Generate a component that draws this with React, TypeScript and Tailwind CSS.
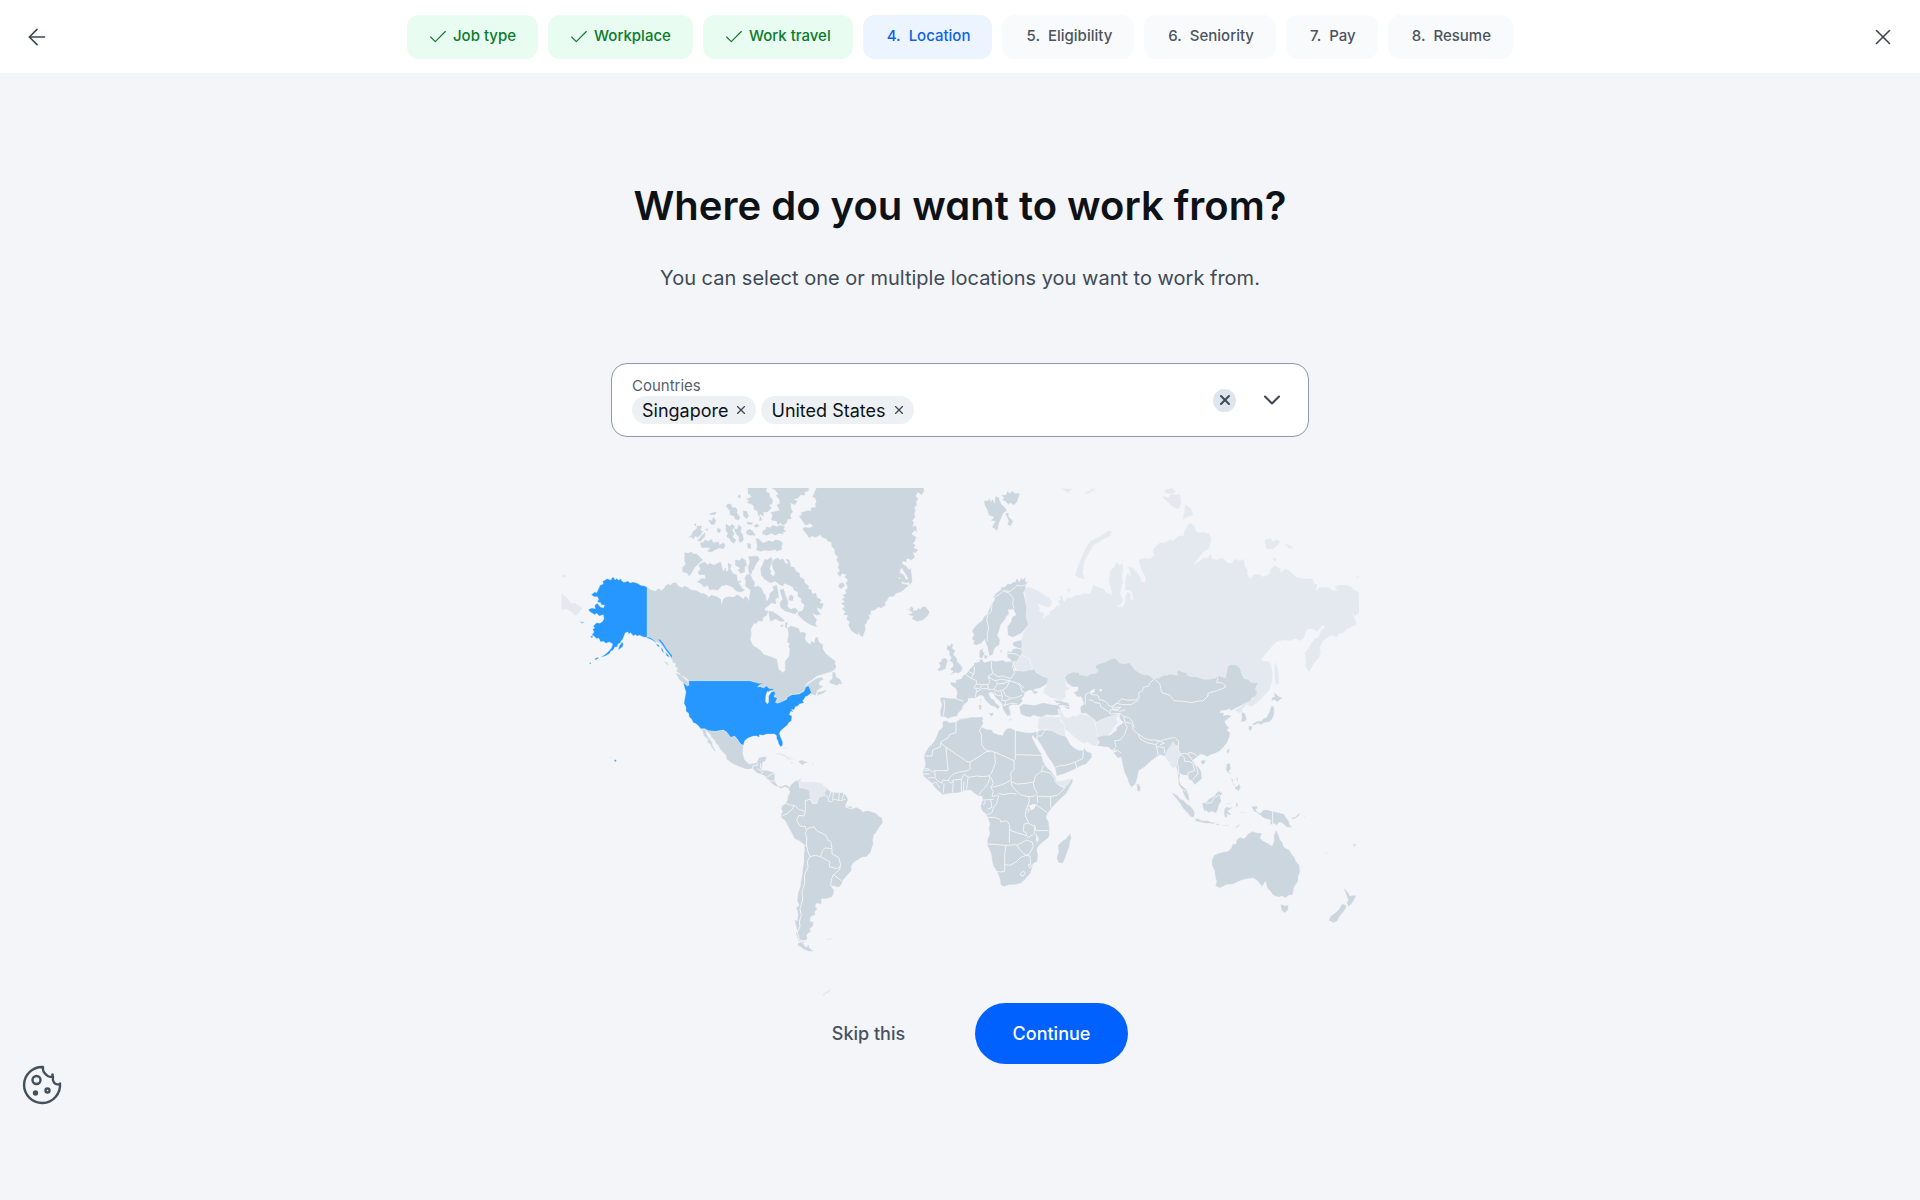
import { useState } from 'react'
import { ArrowLeft, Check, ChevronDown, X } from 'lucide-react'

const steps = [
    { label: 'Job type', state: 'done' },
    { label: 'Workplace', state: 'done' },
    { label: 'Work travel', state: 'done' },
    { label: 'Location', state: 'current' },
    { label: 'Eligibility', state: 'todo' },
    { label: 'Seniority', state: 'todo' },
    { label: 'Pay', state: 'todo' },
    { label: 'Resume', state: 'todo' },
]

const stepStyles: Record<string, string> = {
    done: 'bg-[#e9fcf2] text-[#0b7a2d]',
    current: 'bg-[#ecf4ff] text-[#0f62e6]',
    todo: 'bg-[#f9fafc] text-[#4b545e]',
}

// Map regions, each drawn from its own origin. Three units make one pixel.
const regions = [
    {
        name: 'Russia',
        origin: 'translate(1437 -24)',
        muted:
            'M-44 318L-40 322-30 322-10 330 6 340 20 350 28 352 36 366 30 382 20 382 8 376 -8 370 0 386 -4 392 12 400 10 418 18 408 28 404 28 396 44 386 48 378 60 376 54 364 62 358 58 350 66 346 72 366 84 352 94 354 104 346 118 346 130 340 150 342 156 328 160 314 172 320 190 326 198 336 216 346 214 330 206 300 212 270 222 262 230 246 238 256 246 250 250 262 246 290 248 310 240 340 250 360 242 372 232 380 246 380 254 374 256 350 262 336 272 340 272 360 280 360 276 336 266 330 256 330 256 300 262 280 272 290 270 270 262 262 276 262 286 272 300 290 306 306 316 308 316 290 306 272 300 254 296 240 314 234 330 236 342 226 338 210 350 196 360 188 376 188 390 178 400 182 414 168 430 168 434 150 450 128 464 138 466 150 474 158 490 156 508 162 514 176 510 194 506 206 490 216 478 230 460 256 478 244 490 234 502 234 512 222 516 236 530 240 540 234 552 236 562 248 576 250 584 236 596 242 612 238 614 258 622 270 622 284 632 298 640 284 656 282 670 290 690 282 692 268 704 256 720 266 722 278 736 266 748 272 762 284 768 292 790 296 818 296 822 310 832 314 828 332 838 322 850 322 866 322 880 332 892 332 884 320 900 314 930 318 942 330 956 336 958 398 944 408 936 400 946 420 950 434 936 440 920 448 910 458 898 460 890 472 874 466 860 474 848 484 840 500 842 516 836 534 820 552 808 576 796 560 798 542 794 520 806 504 814 490 824 476 836 470 844 450 856 440 848 436 830 456 820 448 804 446 796 460 792 474 782 482 766 476 750 482 734 480 714 484 702 492 690 506 678 520 664 538 670 544 684 544 694 556 698 580 696 604 688 630 676 644 664 656 650 668 634 680 616 672 540 620 500 640 300 620 120 640 74 592 80 620 100 626 76 632 78 650 64 662 48 656 30 652 10 638 14 624 22 614 -60 590 -80 550 -60 520 -56 480 -50 460 -34 434 -42 410 -40 380 -46 340Z M106 286L112 264 122 240 134 210 150 184 180 170 206 152 216 154 210 168 186 180 160 196 146 220 132 246 128 276 134 298 118 294Z M374 30L396 24 408 36 394 42 378 40Z M366 50L378 50 384 54 394 42 410 44 420 42 424 70 416 88 398 80 384 66Z M432 100L436 74 452 84 460 104 444 110 428 118Z M674 180L690 174 700 186 708 178 720 184 714 194 700 206 680 208 676 194Z M732 190L746 194 762 202 748 206Z M696 234L710 236 706 246Z M64 26L98 26 84 38Z M134 42L140 34 150 32 154 26 168 26 146 40Z M704 546L712 560 716 586 716 610 708 616 704 590Z M948 294L954 288 956 294Z M82 328L90 326 90 334 84 336Z',
    },
    {
        name: 'Canada and Alaska',
        origin: 'translate(-33 -24)',
        outline: '#ccd6de',
        land:
            'M291 322L302 330 318 334 322 328 330 326 330 334 342 326 346 318 356 312 362 318 366 310 378 308 384 318 398 324 402 318 412 322 424 330 440 332 452 340 464 342 474 348 470 356 484 346 500 350 512 358 514 376 520 358 528 352 536 350 552 352 562 344 574 352 580 358 586 348 594 356 597 366 600 340 604 318 608 300 614 306 612 322 624 318 634 324 640 338 646 346 650 366 658 352 660 340 672 330 668 320 680 316 684 336 686 352 676 356 678 372 664 368 654 378 644 384 646 394 654 392 650 406 640 412 636 424 624 422 620 430 612 430 606 440 602 450 604 462 600 478 608 496 624 506 634 514 642 524 662 530 680 538 682 548 686 568 698 578 706 572 706 544 718 528 720 508 716 500 720 490 712 486 716 466 714 444 722 438 746 446 750 458 760 456 768 462 764 476 770 486 782 494 784 484 794 490 796 474 802 472 806 486 818 494 818 508 830 524 838 530 846 536 856 544 854 552 858 558 856 566 846 574 826 580 800 588 785 600 770 610 762 622 776 612 796 598 814 592 820 598 808 604 806 614 818 620 802 630 796 646 784 642 778 620 768 620 762 632 748 640 726 642 712 652 700 662 680 672 676 668 684 656 672 644 668 632 652 624 640 624 628 616 614 606 600 600 416 600 404 590 394 586 388 578 380 574 384 564 376 560 378 550 370 548 366 536 352 516 330 490 304 476 291 472Z M378 580L392 586 404 596 414 606 416 618 402 610 388 598Z M848 578L854 576 858 592 870 598 876 612 868 610 862 616 842 610 838 604 848 596Z M804 636L812 636 830 630 822 638 802 646Z M344 546L352 548 354 556Z M404 218L414 220 424 216 430 222 440 222 450 232 458 240 446 250 434 262 426 276 418 288 410 278 398 276 398 262 408 252 404 244Z M446 256L454 250 464 246 472 254 480 250 492 256 504 250 512 246 516 264 520 276 526 264 528 276 536 270 534 250 544 254 540 266 550 282 560 284 562 300 570 316 578 326 584 330 574 336 560 334 548 322 530 314 514 318 504 330 488 328 478 330 474 316 462 320 452 310 442 306 454 296 468 296 464 284 448 284 444 276 452 268Z M556 240L570 242 574 234 586 240 590 256 584 260 584 276 572 280 564 270 572 264 556 256Z M596 230L622 228 628 238 618 252 612 266 606 274 604 282 598 280 594 262 600 246Z M590 284L600 282 610 304 608 324 602 330 594 324 586 318 588 302 584 296Z M640 250L644 238 652 240 662 232 668 240 662 256 658 266 664 274 660 280 670 290 676 280 668 262 666 250 674 238 684 234 690 240 698 236 708 252 716 250 708 238 718 240 722 260 732 262 738 274 748 280 750 292 762 298 764 308 776 318 774 326 784 330 786 342 798 340 800 352 814 360 808 368 820 372 814 388 800 382 804 394 812 402 802 406 786 400 800 420 796 430 800 440 782 434 768 426 756 416 744 404 744 396 758 392 764 376 754 366 754 356 744 348 744 336 732 330 728 320 718 316 704 310 698 318 690 314 676 304 660 308 644 298 634 286 632 266Z M718 348L724 344 730 350 728 362 716 360Z M690 330L700 326 706 344 714 366 712 380 722 388 736 384 744 392 736 402 722 398 704 392 692 382 690 368 698 358Z M656 394L670 396 684 406 700 418 704 424 690 424 676 416 662 424 658 410Z M692 436L700 434 696 442Z M706 430L712 426 710 446 706 440Z M618 176L626 176 632 184 640 190 656 182 668 186 676 180 690 182 698 190 694 200 696 208 680 214 676 208 660 212 644 210 632 214 620 210 622 196Z M594 24L650 24 648 36 658 40 660 50 668 60 666 72 656 74 664 84 652 96 640 96 640 108 630 102 626 110 622 92 612 88 612 78 604 72 592 68 598 60 588 58 606 50 594 40Z M666 24L776 24 776 32 764 36 764 46 752 44 744 54 730 58 742 64 734 74 722 68 722 82 728 96 720 104 724 116 712 118 710 128 700 136 690 128 684 134 680 124 664 120 668 104 662 98 684 92 690 90 680 76 690 70 688 58 678 46 686 44 676 30Z M638 154L646 150 650 140 660 144 668 136 680 140 692 136 704 140 700 148 708 154 698 156 700 162 688 160 676 166 664 160 650 166 638 162Z M528 78L534 72 542 72 548 84 556 82 562 90 560 98 570 112 566 120 556 118 552 108 540 104 540 92Z M580 92L590 94 596 108 590 116 580 108Z M564 48L570 44 572 52 566 54Z M528 132L540 140 546 132 554 140 546 150 552 160 548 172 558 180 552 190 542 184 540 176 530 170 534 160 528 152Z M552 146L562 148 566 134 574 142 572 156 578 164 580 180 572 188 566 180 568 170 560 164Z M590 152L600 148 608 154 616 166 600 166 590 162Z M592 190L602 192 602 206 594 204Z M592 126L608 128 604 134 592 132Z M630 108L636 120 628 122Z M612 136L624 132 626 140 616 142Z M450 190L462 186 464 180 476 184 484 178 490 188 506 186 508 196 520 188 526 196 520 206 508 204 494 210 484 216 472 214 482 204 466 202 456 204Z M416 172L424 166 430 154 440 146 442 138 456 138 450 150 458 154 452 164 444 172 436 168 430 178 424 170Z M442 182L458 164 466 158 464 170 452 184Z M476 120L486 122 490 112 498 122 492 134 482 132Z M478 102L488 98 500 96 494 104 484 104Z M502 144L512 148 510 158 502 156Z M432 134L438 130 438 138Z M466 148L474 146 472 152Z M564 304L572 302 572 308Z',
        muted: 'M34 340L50 352 66 372 74 368 84 376 98 384 90 394 78 408 64 396 48 386 34 390Z M36 288L44 282 50 290 40 292Z',
        selected:
            'M190 291L196 300 200 295 206 301 212 296 216 303 222 307 234 303 240 309 250 306 262 310 272 316 284 318 291 322 291 472 280 471 274 468 268 466 262 468 256 464 250 468 242 458 236 462 234 456 226 458 222 468 218 478 214 482 210 490 204 492 202 500 194 502 190 510 182 514 180 520 166 528 152 532 164 524 176 514 184 504 188 492 178 486 168 490 160 484 152 486 146 474 140 476 134 470 126 464 132 456 128 448 134 444 130 438 140 428 150 430 158 424 162 416 160 404 148 408 140 400 134 404 118 394 116 388 126 384 136 386 134 376 142 370 150 380 160 384 164 376 154 374 152 368 142 366 146 358 142 350 132 350 124 344 134 336 140 338 144 330 150 316 160 312 158 304 172 296 182 300 186 294Z M216 486L220 492 218 500 210 506 204 510 208 498Z M134 536L144 532 146 535 136 540Z M88 422L94 426 104 428 96 430Z M120 470L130 466 126 474Z M119 548L123 548 123 552 119 552Z M291 470L302 473 314 482 320 490 312 484 302 478 291 474Z M324 478L330 478 340 490 350 506 358 516 366 526 366 536 360 526 350 514 342 502 334 490Z M318 492L326 494 330 502 322 498Z M332 502L338 508 342 520 336 514Z M346 516L354 524 360 532 350 528Z',
    },
    {
        name: 'Greenland and Iceland',
        origin: 'translate(537 -24)',
        outline: '#ccd6de',
        land:
            'M230 24L550 24 552 34 544 44 534 36 526 48 534 56 528 66 530 74 522 84 526 92 522 102 526 110 516 122 522 128 516 140 528 138 530 156 524 150 514 162 528 172 524 184 518 190 526 196 520 204 534 210 526 218 518 216 524 232 514 240 500 234 498 246 488 242 486 252 498 258 506 270 512 266 516 304 510 314 508 306 496 308 486 304 484 312 472 308 470 298 484 296 472 288 478 278 490 284 498 300 506 296 492 274 484 260 490 256 480 270 474 308 506 316 494 326 486 334 468 340 462 348 446 350 440 362 434 368 436 376 422 384 416 380 404 390 392 392 392 404 386 402 388 416 382 420 378 432 374 432 376 450 372 458 368 470 360 466 356 456 352 464 344 458 334 452 330 444 326 434 330 426 320 418 324 406 312 404 316 394 306 386 316 380 304 370 316 366 306 358 316 352 308 346 320 340 316 332 324 322 318 310 324 300 314 290 320 284 306 280 300 290 292 280 300 272 294 262 298 252 290 240 294 232 284 220 284 208 276 200 274 186 264 184 260 176 246 172 242 164 228 172 214 168 208 174 202 164 188 148 194 142 210 144 220 138 210 130 198 136 192 130 178 108 186 104 184 98 202 92 212 94 214 84 228 82 226 70 230 66 226 54 218 50Z M298 312L308 308 314 316 304 326 296 320Z M502 386L510 390 512 380 520 384 518 392 530 392 536 384 540 390 546 382 556 380 562 388 568 396 562 408 548 420 532 424 516 416 522 408 506 404 520 398Z',
    },
    {
        name: 'Mexico and Central America',
        origin: 'translate(-33 516)',
        land:
            'M452 206L476 212 496 214 520 212 530 216 542 230 554 228 562 240 572 252 580 258 578 280 584 300 598 312 612 310 620 308 626 294 638 290 650 290 646 304 638 306 636 322 634 330 654 332 674 338 674 362 678 370 684 378 692 380 706 374 718 380 716 388 710 382 704 380 692 386 684 380 676 378 664 370 660 362 650 356 646 348 636 344 620 338 608 326 590 328 568 320 546 310 530 298 528 286 512 270 504 256 498 250 492 238 484 232 480 222 468 212 468 220 478 236 486 246 488 258 498 274 494 274 484 262 482 254 472 246 474 238 462 228 458 214Z M746 304L754 300 764 304 776 308 764 310 758 316 748 308Z M786 311L792 312 790 315Z M722 306L732 308 724 310Z',
        muted: 'M672 286L684 278 704 284 716 292 732 298 714 299 708 292 694 286 684 282Z M700 264L710 262 712 268Z',
        borders: 'M606 328L610 316 622 316 622 308 M622 326L636 334 M632 344L640 334 M650 352L660 346 674 338 M662 362L676 364 M632 310L632 326',
        selected:
            'M416 62L600 62 612 66 626 70 640 70 630 74 622 80 632 80 640 84 650 78 658 86 672 86 670 90 660 92 654 96 652 94 648 104 646 124 652 132 656 126 656 108 664 96 672 94 676 100 672 110 682 114 676 128 684 130 698 124 710 118 712 112 726 104 748 102 762 94 768 80 776 78 780 88 784 98 772 108 766 110 762 118 758 122 762 128 748 132 744 138 736 140 732 150 724 148 730 156 722 154 718 164 726 168 724 182 716 188 712 196 704 202 692 212 688 220 692 232 698 246 698 256 692 260 686 252 684 242 680 236 680 228 674 222 664 222 650 222 640 226 628 224 628 232 620 228 610 228 594 234 584 242 580 256 572 252 562 238 554 228 542 232 530 216 520 210 496 214 476 212 464 206 452 206 446 198 436 190 430 188 424 176 418 172 416 160 408 154 408 142 402 130 404 118 408 96 404 84 400 68 412 78 417 76Z M193 299L199 300 198 305 193 304Z M180 291L182 292 181 294Z',
    },
    {
        name: 'South America',
        origin: 'translate(597 816)',
        land:
            'M84 108L90 96 86 88 92 76 104 64 116 60 124 54 118 68 124 64 132 68 150 66 170 68 186 70 190 78 198 82 206 90 212 96 230 98 248 98 260 108 264 120 258 132 256 140 274 138 278 146 290 142 304 150 308 156 320 152 330 154 348 160 356 168 366 174 368 188 356 204 348 218 342 224 338 240 340 252 336 262 332 276 320 290 306 292 296 298 280 308 274 318 274 332 260 348 248 362 244 374 236 382 220 378 212 378 222 390 220 404 214 412 200 416 184 416 184 432 168 430 166 440 172 446 164 456 166 464 152 470 150 484 160 486 160 496 150 506 152 514 140 524 142 538 130 544 116 544 108 520 112 512 106 490 104 480 112 482 114 466 112 450 108 444 118 436 112 424 114 400 122 376 122 366 126 350 128 330 132 300 132 280 134 268 132 254 120 244 104 236 98 224 88 206 76 182 64 174 64 160 68 156 64 146 66 138 78 130 82 120Z M116 548L134 544 130 552 138 562 146 554 148 564 162 574 146 574 130 568 122 560 112 556Z M200 538L206 536 206 540Z M208 537L214 535 213 539Z',
        muted: 'M124 64L118 72 120 84 136 86 148 92 150 116 158 130 172 128 178 112 196 106 194 98 202 86 190 78 186 70 170 68 150 66 132 68Z M188 704L196 696 204 692 214 686 208 696 198 702 190 708Z M176 702L180 700 178 704Z',
        borders:
            'M78 130L92 136 104 136 116 148 134 154M68 166L80 162 96 148 104 136M172 130L158 130 150 118 136 122 136 154 132 168 M132 168L116 166 110 182 120 198 136 200 138 208 M142 206L162 200 170 212 198 226 204 240 212 244 216 264 M216 266L196 264 188 272 182 290 166 286 150 290 M132 254L140 258 140 230 136 220 142 206 M140 258L144 276 150 290 M216 266L216 282 236 292 242 316 M182 290L210 306 208 320 232 326 242 316 238 330 220 344 244 362 M220 344L214 360 212 378 M150 290L142 304 144 322 134 344 134 370 126 396 128 420 120 446 124 466 118 486 120 500 112 516 118 540 142 544 M196 106L206 114 204 122 214 126 222 118 242 122 256 118 M212 96L208 112 M220 98L218 120 M238 98L236 122 M252 100L246 118 M116 60L120 84 M258 142L276 146 M124 546L140 560',
    },
    {
        name: 'Europe',
        origin: 'translate(1017 -24)',
        land:
            'M252 62L264 62 270 54 272 66 278 58 284 70 286 48 296 52 304 72 316 84 320 92 310 100 302 118 296 132 292 154 284 146 276 142 286 124 272 122 282 112 266 106 262 90 254 76Z M304 46L318 44 322 34 330 40 336 32 346 40 360 40 356 52 352 64 342 76 330 68 326 74 316 64 306 60 312 54Z M316 100L326 98 326 110 340 124 332 138 322 134 326 122Z M384 304L376 306 376 292 368 300 364 292 358 306 350 294 346 306 338 306 334 312 322 312 316 320 304 322 302 330 288 340 280 352 284 360 272 376 268 388 260 404 252 410 246 422 230 434 216 452 222 464 216 476 222 482 220 492 228 496 244 490 254 478 258 490 262 500 268 528 278 524 284 504 298 494 300 480 292 466 298 450 302 434 314 420 320 408 328 402 324 390 340 388 348 404 336 412 334 424 322 440 324 466 338 472 364 460 374 448 386 434 378 410 380 380 374 354 370 338 376 330 376 318Z M142 496L150 498 154 490 160 494 156 504 166 512 160 524 170 534 172 546 180 552 188 564 184 574 176 580 166 578 150 584 160 574 150 568 160 558 158 548 148 542 154 534 148 524 148 514 140 508Z M116 548L124 544 126 536 136 534 144 542 138 556 138 566 118 574 112 568 122 560Z M238 512L250 504 248 514 254 520 246 536 238 532Z M254 524L264 528 258 538 252 532Z M300 514L306 508 304 518Z M322 514L334 516 338 508 352 504 340 498 338 488 348 484 364 480 366 492 364 508 366 518 358 532 350 544 334 546 332 538 322 532Z M152 606L168 608 168 600 184 596 190 586 198 582 206 572 212 564 222 556 222 548 238 546 240 536 248 540 252 548 272 542 290 544 308 540 318 546 330 544 340 548 344 572 372 574 388 570 404 568 408 578 420 584 430 590 444 594 442 610 434 616 420 624 404 628 400 632 412 634 412 640 402 642 396 632 388 630 374 638 372 648 364 656 368 664 356 676 336 674 326 680 330 690 332 706 322 708 314 696 308 686 306 672 296 660 286 652 280 640 272 636 266 640 272 654 282 660 286 668 300 680 294 688 284 680 272 676 264 668 254 658 250 648 240 646 226 654 214 654 204 656 204 664 190 676 186 688 174 700 172 708 154 712 144 716 134 710 122 710 120 694 126 676 120 656 126 652 142 654 168 656 172 640 168 626 152 614Z M266 700L282 698 276 710Z M236 676L244 674 244 688 238 690Z M240 658L244 658 242 670Z M326 718L338 718 330 722Z M178 716L248 712 250 720 180 722Z',
        borders:
            'M262 484L262 460 266 444 260 420 264 402 274 394 276 370 286 350 300 342 310 332 328 340 340 356 338 370 342 386 M310 332L330 334 346 322 350 316 366 318 376 314 M340 500L364 508 M324 520L348 522 360 530 M168 656L190 664 M132 660L134 680 130 708 M198 584L212 594 230 602 228 614 222 622 230 630 226 652 M206 574L220 582 214 594 M222 582L224 560 M274 544L274 560 278 580 264 590 270 604 264 614 244 614 228 612 M240 536L250 538 M278 580L294 590 308 588 332 596 M332 596L344 578 338 562 340 548 M264 590L284 602 304 598 330 602 M224 624L238 626 246 616 M230 636L246 626 264 626 M264 614L264 628 282 628 292 612 290 604 M292 612L312 610 330 602 M282 628L294 634 308 630 320 622 330 602 M308 630L316 646 330 654 344 654 366 646 M330 602L352 610 362 620 366 634 374 636 M354 608L372 624 M284 634L286 644 306 648 M302 634L308 650 304 660 318 662 332 656 M318 662L314 676 332 670 352 672 M308 678L318 672 M366 526L388 536 392 552 398 562 392 570',
    },
    {
        name: 'Africa and the Middle East',
        origin: 'translate(1017 636)',
        land:
            'M128 64L140 62 148 68 168 66 180 58 196 56 212 52 236 52 248 50 246 60 250 70 244 80 258 88 276 90 280 98 296 104 308 106 312 96 320 86 332 84 346 92 366 96 380 98 398 98 408 94 412 106 408 118 398 106 396 112 408 136 424 162 428 180 432 190 440 202 452 212 466 232 470 246 492 242 518 236 518 246 508 264 498 282 484 294 462 316 444 338 438 352 446 366 448 384 448 408 442 416 428 426 414 440 410 450 414 462 412 484 398 492 396 504 392 518 374 540 362 550 344 554 328 554 312 560 302 554 300 536 290 512 280 498 276 480 274 462 262 436 262 420 270 400 266 386 270 372 262 350 258 342 246 332 242 318 248 300 246 288 236 288 226 282 212 270 200 270 176 278 152 280 128 284 110 268 104 262 96 250 80 236 70 228 68 212 74 204 76 188 72 172 74 162 84 144 96 132 104 122 112 104 116 92 128 82Z M510 400L514 414 510 424 508 440 500 460 494 478 488 490 476 488 470 474 476 456 474 436 486 424 498 416Z M358 20L370 12 404 16 430 8 458 14 476 16 482 26 480 44 456 46 440 44 424 52 400 46 390 52 376 48 362 42Z M462 0L480 2 506 10 510 28 500 26 488 16 476 16Z M412 96L420 90 436 90 456 92 480 104 496 108 502 116 510 132 520 142 534 150 550 152 552 144 560 154 574 160 576 172 566 182 558 192 546 196 534 202 524 208 510 214 490 222 470 228 466 206 454 184 444 172 438 160 424 136 412 118Z',
        muted:
            'M474 26L490 42 494 52 510 54 520 44 540 42 562 46 584 52 584 72 590 92 592 106 598 120 590 138 572 134 564 126 550 130 530 116 516 104 504 92 496 90 492 72 480 52Z M586 58L600 54 622 44 636 36 644 46 660 42 648 56 654 70 640 82 636 94 620 108 596 112 590 92Z M416 56L430 50 480 52 482 64 492 74 496 108 480 104 456 92 436 86 422 92 414 84Z M470 246L492 242 516 236 506 252 494 264 478 256Z',
        borders:
            'M76 168L96 168 98 150 122 140 122 126 146 112 148 104 168 98 168 66 M122 128L138 142 192 178 198 184 210 186 M138 142L144 212 104 212 98 216 84 206 74 206 M246 80L238 92 244 104 246 136 254 148 272 156 M210 186L240 168 256 156 272 152 284 158 M284 156L342 182 346 178 346 92 M346 164L426 166 M342 182L342 208 332 220 334 240 M284 158L286 190 274 220 266 228 M210 186L210 206 204 212 178 216 160 222 150 232 144 242 M66 214L88 210 M88 222L70 222 M84 234L104 232 112 242 126 250 128 240 144 242 154 250 160 240 184 238 192 222 M104 212L106 232 M94 252L108 246 120 264 M132 250L130 278 M160 240L158 278 M184 238L184 274 M192 244L190 274 M192 222L206 232 M200 268L204 232 230 228 246 230 266 228 274 234 M270 232L264 250 252 266 242 276 236 286 M274 234L280 250 272 262 280 274 276 290 M274 262L300 256 316 250 332 240 M282 298L248 300 M254 302L256 310 248 314 M276 290L290 286 296 280 308 284 332 280 350 282 M332 240L336 258 350 274 362 284 384 290 M334 246L352 252 378 250 400 246 M400 246L402 262 412 280 404 288 384 290 M402 246L406 228 424 214 430 196 M424 214L440 216 452 220 464 236 M464 236L466 246 478 256 494 264 472 286 450 290 432 290 412 288 M452 290L452 320 456 328 M412 288L412 308 M384 318L408 314 442 338 M386 290L388 304 378 330 376 346 386 370 M378 326L388 328 384 338 M296 286L290 310 280 324 276 338 262 344 M272 300L276 322 262 328 M264 352L284 352 300 358 302 366 320 362 328 374 330 390 M262 432L318 436 350 434 M328 388L328 428 M328 390L350 398 370 404 380 408 378 398 370 394 372 372 386 370 M386 370L404 380 408 392 446 392 M404 382L402 400 412 408 416 422 M400 404L380 414 M350 436L366 428 380 420 396 426 400 440 388 462 378 466 M318 436L314 464 314 514 300 516 292 514 M314 494L330 496 348 486 362 472 378 466 366 456 350 436 M378 466L390 468 392 494 M362 520L370 514 376 518 370 528 362 526Z M386 492L394 496 392 504 386 500Z M466 202L482 196 496 196 526 186 530 204 M526 186L548 176 550 154 M412 108L424 108 430 98 436 90 M458 12L480 10 M476 30L490 16 506 22 M480 52L474 26',
        water: 'M388 320L398 312 408 314 404 324 394 332Z M402 370L406 378 408 386 404 382Z M408 406L414 418 412 430 408 420Z',
    },
    {
        name: 'Asia and Oceania',
        origin: 'translate(1497 486)',
        land:
            'M14 82L24 72 40 66 58 68 58 74 84 78 90 72 108 70 116 62 106 52 110 44 136 36 150 28 166 24 178 38 190 42 208 38 216 48 228 62 240 70 250 74 264 74 282 88 300 82 310 76 322 76 330 72 354 76 350 66 356 60 368 66 380 68 382 76 392 80 410 80 430 88 448 88 466 84 478 78 496 84 500 66 504 48 512 44 528 44 540 54 544 68 552 86 564 88 574 98 594 98 590 108 586 120 592 126 588 138 574 144 572 152 556 160 540 168 524 176 512 182 508 176 500 180 482 182 480 188 492 188 490 198 502 194 514 198 504 206 494 214 500 226 508 234 500 240 510 248 508 262 500 280 490 292 478 304 466 310 452 314 442 320 434 316 422 312 412 320 400 330 404 342 416 352 424 366 426 386 414 396 404 404 396 392 386 388 382 376 366 374 360 370 358 392 362 404 374 414 380 420 386 436 388 454 378 446 370 430 366 418 356 404 354 380 352 360 344 340 340 352 328 336 314 318 300 314 294 318 288 322 272 334 254 350 246 356 236 362 232 384 226 402 214 412 206 398 202 384 194 368 188 344 184 322 174 324 160 308 170 304 154 300 146 292 112 288 118 276 110 262 130 256 150 256 170 240 170 232 190 218 178 204 180 192 160 196 146 200 124 208 110 216 98 204 78 190 62 190 60 172 72 162 64 140 52 140 40 126 54 122 54 112 36 110 22 100 18 92Z M544 188L554 188 560 206 556 214 542 216 546 202Z M634 168L640 168 643 180 642 194 636 208 628 215 612 218 604 224 594 220 582 226 576 222 592 214 606 212 610 206 620 202 628 186Z M566 228L576 228 576 236 570 244 566 236Z M643 126L654 138 668 144 658 150 654 156 642 149 634 154 637 142 644 140Z M500 302L508 294 508 304 502 312Z M422 334L430 330 438 332 434 340 426 344Z M500 342L510 340 512 356 506 364 514 374 504 368 498 360Z M524 412L532 408 538 402 542 412 536 424 530 418 526 420Z M514 384L520 390 516 398Z M528 382L534 386 532 398Z M518 400L524 402 522 408Z M492 400L500 386 498 392Z M230 402L236 402 242 412 240 424 232 424Z M334 428L344 432 352 436 360 446 372 452 380 462 388 466 396 474 404 486 402 502 392 500 382 488 370 476 360 460 348 444Z M404 506L416 506 424 512 444 512 452 516 464 518 464 522 448 520 436 520 420 516 408 514Z M468 521L478 522 476 526 468 524Z M484 526L498 526 508 524 500 528Z M524 534L534 526 540 522 536 530Z M426 460L432 458 440 456 446 448 456 442 464 438 470 428 478 422 488 430 480 438 484 454 476 466 474 476 468 490 456 484 446 488 440 482 432 482Z M494 476L500 470 508 474 518 470 512 478 502 482 508 488 514 494 508 496 502 490 500 504 494 500 492 486Z M574 470L590 468 594 475 586 478 592 486 602 490 610 480 622 480 638 484 656 488 672 492 680 506 686 512 688 522 696 533 680 531 668 520 658 516 650 526 642 520 630 524 632 510 618 506 608 502 602 496 594 490 582 484Z M694 504L708 500 716 490 720 492 712 502 700 508Z M528 460L534 458 532 472 528 470Z M500 460L520 460 500 462Z M542 488L562 486 544 490Z M648 540L656 556 660 570 666 576 672 592 688 600 696 614 702 620 708 634 718 646 720 666 714 680 714 694 702 712 698 734 686 736 676 744 666 738 656 742 640 736 630 722 622 714 620 706 616 694 606 710 602 704 592 692 580 684 562 686 546 690 532 696 520 702 498 704 480 714 466 708 470 694 466 682 464 664 456 646 456 630 462 616 476 610 490 606 504 604 514 594 518 582 528 582 530 570 540 562 552 566 558 560 564 552 578 544 588 548 606 550 600 564 608 572 620 578 636 588 642 574 642 556Z M662 763L676 767 685 765 684 779 674 789 665 781Z M851 713L865 728 869 737 889 736 882 750 877 758 866 770 860 759 865 750 861 740Z M846 762L858 765 858 774 849 787 838 800 832 813 820 818 806 811 812 799 829 786 838 776Z M880 583L887 582 887 588 880 589Z M796 606L801 608 801 613Z',
        muted:
            'M314 318L322 300 330 290 340 274 346 286 354 286 356 302 364 314 350 324 350 350 338 354 330 346 328 332Z M524 180L540 172 556 158 558 166 546 178 548 188 536 188Z M730 496L738 504 732 502Z',
        borders:
            'M282 88L270 98 266 108 250 112 248 122 236 128 238 142 226 150 200 150 184 146 176 156 160 168 M76 164L76 134 86 128 96 134 92 124 104 118 M86 150L96 150 104 158 120 160 122 170 144 184 152 192 M96 134L114 136 118 148 136 154 150 170 160 168 168 160 190 164 214 164 238 148 M160 168L156 178 168 182 182 172 160 174 M150 192L150 180 168 178 178 184 196 180 M152 192L180 190 192 200 206 202 214 210 220 222 218 238 232 250 252 264 270 270 288 270 302 274 314 268 328 266 344 262 356 274 354 300 364 312 374 310 384 312 388 306 404 312 412 320 M286 90L300 102 302 116 306 128 330 136 342 152 372 154 394 158 412 154 430 152 444 138 444 130 470 122 496 112 496 106 484 98 470 98 474 84 M234 252L240 266 260 278 288 284 294 274 302 274 314 280 300 284 M192 200L194 216 212 220 224 232 M194 218L202 232 192 256 180 270 164 272 168 290 160 298 178 304 184 310 M288 284L292 302 294 316 M290 290L312 292 314 310 M364 314L354 324 352 340 356 356 356 374 M364 314L372 322 374 334 386 334 398 340 404 362 384 368 384 382 M384 312L394 326 410 352 414 372 404 382 398 390 M430 456L440 460 454 458 464 442 480 434 M638 482L638 524 M366 418L378 424 M476 420L482 428',
        water: 'M118 118L126 118 126 124 118 124Z M90 126L100 118 106 124 98 130Z M34 112L54 110 52 122 38 128 42 142 56 150 60 170 62 188 50 200 36 196 28 180 32 162 20 140 14 126Z',
    },
]

function WorldMap() {
    return (
        <svg viewBox="0 0 2394 1530" role="img" aria-label="World map" className="w-full max-w-[798px]">
            {regions.map((region) => (
                <g key={region.name} transform={region.origin} strokeLinejoin="round">
                    {region.land && <path d={region.land} fill="#ccd6de" stroke={region.outline ?? '#f0f3f8'} strokeWidth="1" />}
                    {region.muted && <path d={region.muted} fill="#e4e9ef" stroke="#eef1f6" strokeWidth="1" />}
                    {region.borders && <path d={region.borders} fill="none" stroke="#f0f4f8" strokeWidth="3" />}
                    {region.water && <path d={region.water} fill="#f3f5f9" />}
                    {region.selected && <path d={region.selected} fill="#2597ff" stroke="#d7ebfd" strokeWidth="1" />}
                </g>
            ))}
        </svg>
    )
}

function CookieIcon() {
    return (
        <svg viewBox="0 0 40 40" className="size-10" fill="none" stroke="#43515e" strokeWidth="2.4" strokeLinejoin="round" strokeLinecap="round">
            <path d="M21 2A18 18 0 1 0 38 18.5C36.5 20 33.5 19.5 32 17.5 31 16 30.5 14 31 11.5 29 12.5 26 11.5 24.5 10 22 8 20.5 5 21 2Z" />
            <circle cx="14.5" cy="15" r="4" />
            <circle cx="25.5" cy="25.5" r="2" />
            <circle cx="13.5" cy="28" r="1.5" fill="#43515e" />
            <path d="M30.5 10.5V9.5" />
        </svg>
    )
}

export default function App() {
    const [countries, setCountries] = useState(['Singapore', 'United States'])

    return (
        <div className="min-h-screen bg-[#f3f5f9] font-['Inter',sans-serif] text-[#0e1217]">
            {/* Header */}
            <header className="flex h-[73px] items-center justify-between bg-white px-6">
                <button aria-label="Back" className="text-[#3c4650]">
                    <ArrowLeft size={26} strokeWidth={1.5} />
                </button>
                <ol className="flex gap-[10px]">
                    {steps.map((step, index) => (
                        <li
                            key={step.label}
                            className={`flex h-11 items-center rounded-xl pr-[22px] pl-6 text-[15px] font-medium ${stepStyles[step.state]}`}
                        >
                            {step.state === 'done' ? (
                                <Check size={22} strokeWidth={1.25} className="mr-1 -ml-1" />
                            ) : (
                                <span className="mr-2">{index + 1}.</span>
                            )}
                            {step.label}
                        </li>
                    ))}
                </ol>
                <button aria-label="Close" className="text-[#3c4650]">
                    <X size={26} strokeWidth={1.5} />
                </button>
            </header>

            {/* Content */}
            <main className="flex flex-col items-center px-6 pt-[107px]">
                <h1 className="text-center text-[40px] leading-[52px] font-semibold [font-feature-settings:'cv11']">
                    Where do you want to work from?
                </h1>
                <p className="mt-8 text-center text-[20px] leading-7 text-[#3f4a56]">
                    You can select one or multiple locations you want to work from.
                </p>

                {/* Country select */}
                <div className="mt-[71px] flex w-full max-w-[698px] items-center rounded-2xl border border-[#9097af] bg-white px-5 py-3">
                    <div className="flex-1">
                        <label htmlFor="countries" className="block text-[15px] leading-5 text-[#56616d]">
                            Countries
                        </label>
                        <div className="flex gap-[5px]">
                            {countries.map((country) => (
                                <span key={country} className="flex h-7 items-center gap-[6px] rounded-full bg-[#edf1f4] pr-2 pl-[10px] text-[18px]">
                                    {country}
                                    <button
                                        aria-label={`Remove ${country}`}
                                        onClick={() => setCountries(countries.filter((c) => c !== country))}
                                    >
                                        <X size={14} strokeWidth={2} className="text-[#3c4650]" />
                                    </button>
                                </span>
                            ))}
                            <input id="countries" className="min-w-0 flex-1 bg-transparent text-[18px] outline-none" />
                        </div>
                    </div>
                    <button
                        aria-label="Clear all"
                        onClick={() => setCountries([])}
                        className="mr-5 flex size-[23px] items-center justify-center rounded-full bg-[#dfe5ec]"
                    >
                        <X size={16} strokeWidth={3} className="text-[#3c4a57]" />
                    </button>
                    <button aria-label="Show countries" className="p-0.5 text-[#3c4650]">
                        <ChevronDown size={28} strokeWidth={1.75} />
                    </button>
                </div>

                <div className="mt-[51px] flex w-full justify-center">
                    <WorldMap />
                </div>

                <div className="mt-[5px] flex gap-[30px] text-[18px] font-medium">
                    <button className="h-[61px] w-[153px] rounded-full text-[#46525e]">Skip this</button>
                    <button className="h-[61px] w-[153px] rounded-full bg-[#0061ff] text-white">Continue</button>
                </div>
            </main>

            <button aria-label="Cookie settings" className="fixed bottom-[95px] left-[22px]">
                <CookieIcon />
            </button>
        </div>
    )
}
